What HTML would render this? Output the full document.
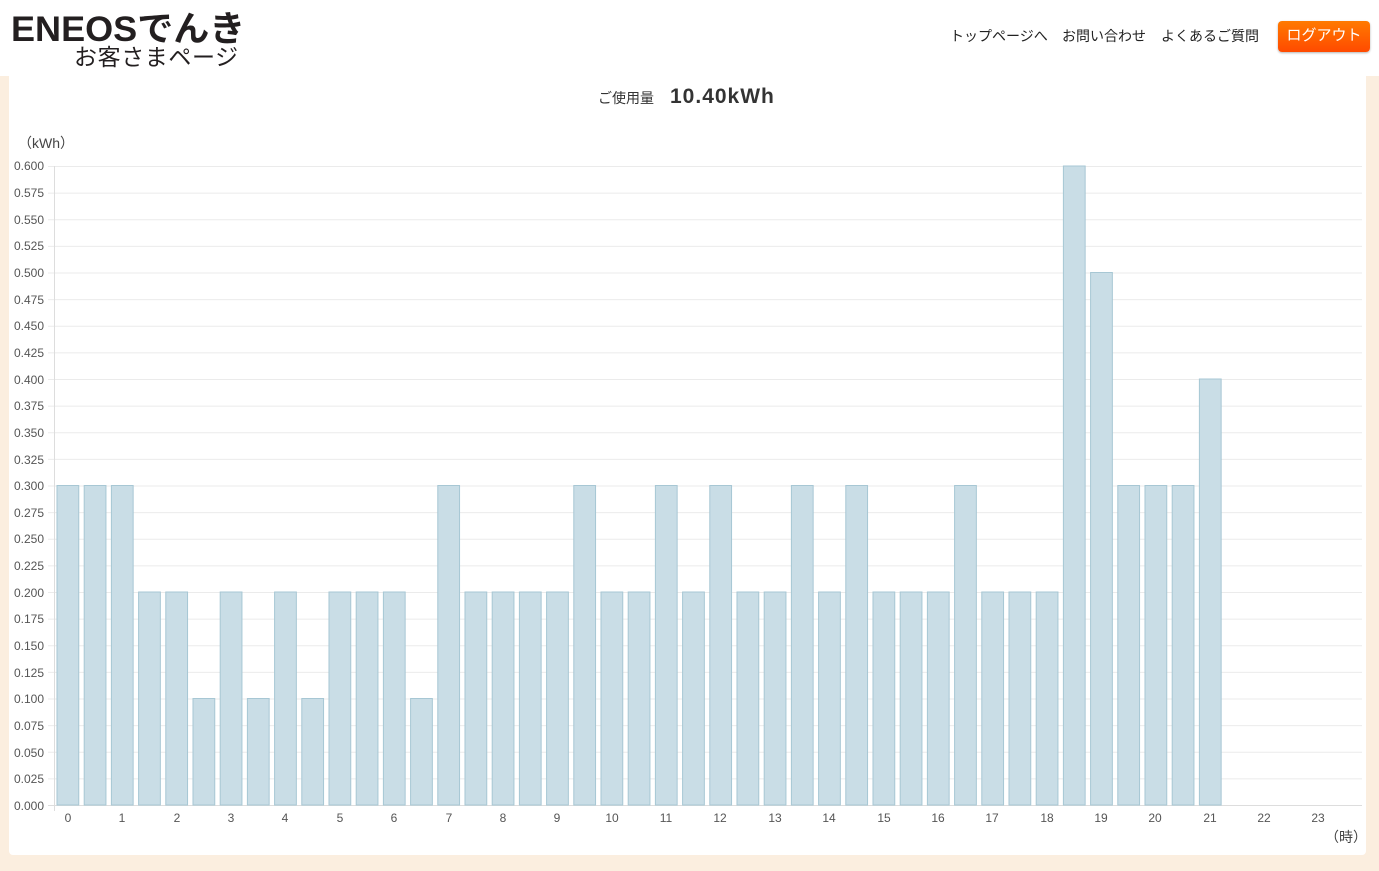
<!DOCTYPE html>
<html><head><meta charset="utf-8"><style>
body{margin:0;width:1379px;height:871px;overflow:hidden;background:#fbeedf;font-family:"Liberation Sans","Noto Sans CJK JP",sans-serif;position:relative}
.hdr{position:absolute;left:0;top:0;width:1379px;height:76px;background:#fff}
.logo1{position:absolute;left:11px;top:1px;font-size:35px;font-weight:bold;color:#231f20;letter-spacing:0;transform:scaleX(1.03);transform-origin:left top;white-space:nowrap}
.logo2{position:absolute;left:74px;top:38px;font-size:23px;letter-spacing:0.6px;color:#231f20;white-space:nowrap}
.nav{position:absolute;top:26px;font-size:14px;color:#222}
.btn{position:absolute;left:1278px;top:21px;width:92px;height:31px;border-radius:4px;background:linear-gradient(#ff7a00,#ff4a00);color:#fff;font-size:15px;text-align:center;line-height:29px;box-shadow:0 1px 2px rgba(0,0,0,.3)}
.card{position:absolute;left:9px;top:76px;width:1357px;height:779px;background:#fff;border-radius:0 0 4px 4px}
</style></head><body>
<div class="hdr">
<div class="logo1">ENEOSでんき</div>
<div class="logo2">お客さまページ</div>
<div class="nav" style="left:950px">トップページへ</div>
<div class="nav" style="left:1062px">お問い合わせ</div>
<div class="nav" style="left:1161px">よくあるご質問</div>
<div class="btn">ログアウト</div>
</div>
<div class="card"></div>
<svg style="position:absolute;left:0;top:0" width="1379" height="871">
<text x="598" y="103" font-size="14" fill="#333">ご使用量</text>
<text x="670" y="103" font-size="21" font-weight="bold" fill="#333" letter-spacing="1">10.40kWh</text>
<text x="18" y="148" font-size="14" fill="#444">（kWh）</text>
<text x="1325" y="842" font-size="14" fill="#444">（時）</text>
<g stroke="#ebebeb">
<line x1="48" x2="1362" y1="166.5" y2="166.5"/><line x1="48" x2="1362" y1="193.1" y2="193.1"/><line x1="48" x2="1362" y1="219.8" y2="219.8"/><line x1="48" x2="1362" y1="246.4" y2="246.4"/><line x1="48" x2="1362" y1="273" y2="273"/><line x1="48" x2="1362" y1="299.6" y2="299.6"/><line x1="48" x2="1362" y1="326.3" y2="326.3"/><line x1="48" x2="1362" y1="352.9" y2="352.9"/><line x1="48" x2="1362" y1="379.5" y2="379.5"/><line x1="48" x2="1362" y1="406.1" y2="406.1"/><line x1="48" x2="1362" y1="432.8" y2="432.8"/><line x1="48" x2="1362" y1="459.4" y2="459.4"/><line x1="48" x2="1362" y1="486" y2="486"/><line x1="48" x2="1362" y1="512.6" y2="512.6"/><line x1="48" x2="1362" y1="539.3" y2="539.3"/><line x1="48" x2="1362" y1="565.9" y2="565.9"/><line x1="48" x2="1362" y1="592.5" y2="592.5"/><line x1="48" x2="1362" y1="619.1" y2="619.1"/><line x1="48" x2="1362" y1="645.8" y2="645.8"/><line x1="48" x2="1362" y1="672.4" y2="672.4"/><line x1="48" x2="1362" y1="699" y2="699"/><line x1="48" x2="1362" y1="725.6" y2="725.6"/><line x1="48" x2="1362" y1="752.3" y2="752.3"/><line x1="48" x2="1362" y1="778.9" y2="778.9"/>
<line x1="54.5" x2="54.5" y1="166" y2="811" stroke="#ddd"/>
<line x1="48" x2="1362" y1="805.5" y2="805.5" stroke="#ddd"/>
</g>
<g font-size="12" fill="#555" text-anchor="end">
<text x="44" y="170">0.600</text><text x="44" y="197">0.575</text><text x="44" y="224">0.550</text><text x="44" y="250">0.525</text><text x="44" y="277">0.500</text><text x="44" y="304">0.475</text><text x="44" y="330">0.450</text><text x="44" y="357">0.425</text><text x="44" y="384">0.400</text><text x="44" y="410">0.375</text><text x="44" y="437">0.350</text><text x="44" y="464">0.325</text><text x="44" y="490">0.300</text><text x="44" y="517">0.275</text><text x="44" y="543">0.250</text><text x="44" y="570">0.225</text><text x="44" y="597">0.200</text><text x="44" y="623">0.175</text><text x="44" y="650">0.150</text><text x="44" y="677">0.125</text><text x="44" y="703">0.100</text><text x="44" y="730">0.075</text><text x="44" y="757">0.050</text><text x="44" y="783">0.025</text><text x="44" y="810">0.000</text>
</g>
<g transform="translate(54,805) scale(27.2,-1065)" fill="#c9dde6" stroke="#a7c7d4" stroke-width="1">
<rect vector-effect="non-scaling-stroke" x="0.11" width="0.8" y="0" height="0.3"/><rect vector-effect="non-scaling-stroke" x="1.11" width="0.8" height="0.3"/><rect vector-effect="non-scaling-stroke" x="2.11" width="0.8" height="0.3"/><rect vector-effect="non-scaling-stroke" x="3.11" width="0.8" height="0.2"/><rect vector-effect="non-scaling-stroke" x="4.11" width="0.8" height="0.2"/><rect vector-effect="non-scaling-stroke" x="5.11" width="0.8" height="0.1"/><rect vector-effect="non-scaling-stroke" x="6.11" width="0.8" height="0.2"/><rect vector-effect="non-scaling-stroke" x="7.11" width="0.8" height="0.1"/><rect vector-effect="non-scaling-stroke" x="8.11" width="0.8" height="0.2"/><rect vector-effect="non-scaling-stroke" x="9.11" width="0.8" height="0.1"/><rect vector-effect="non-scaling-stroke" x="10.11" width="0.8" height="0.2"/><rect vector-effect="non-scaling-stroke" x="11.11" width="0.8" height="0.2"/><rect vector-effect="non-scaling-stroke" x="12.11" width="0.8" height="0.2"/><rect vector-effect="non-scaling-stroke" x="13.11" width="0.8" height="0.1"/><rect vector-effect="non-scaling-stroke" x="14.11" width="0.8" height="0.3"/><rect vector-effect="non-scaling-stroke" x="15.11" width="0.8" height="0.2"/><rect vector-effect="non-scaling-stroke" x="16.11" width="0.8" height="0.2"/><rect vector-effect="non-scaling-stroke" x="17.11" width="0.8" height="0.2"/><rect vector-effect="non-scaling-stroke" x="18.11" width="0.8" height="0.2"/><rect vector-effect="non-scaling-stroke" x="19.11" width="0.8" height="0.3"/><rect vector-effect="non-scaling-stroke" x="20.11" width="0.8" height="0.2"/><rect vector-effect="non-scaling-stroke" x="21.11" width="0.8" height="0.2"/><rect vector-effect="non-scaling-stroke" x="22.11" width="0.8" height="0.3"/><rect vector-effect="non-scaling-stroke" x="23.11" width="0.8" height="0.2"/><rect vector-effect="non-scaling-stroke" x="24.11" width="0.8" height="0.3"/><rect vector-effect="non-scaling-stroke" x="25.11" width="0.8" height="0.2"/><rect vector-effect="non-scaling-stroke" x="26.11" width="0.8" height="0.2"/><rect vector-effect="non-scaling-stroke" x="27.11" width="0.8" height="0.3"/><rect vector-effect="non-scaling-stroke" x="28.11" width="0.8" height="0.2"/><rect vector-effect="non-scaling-stroke" x="29.11" width="0.8" height="0.3"/><rect vector-effect="non-scaling-stroke" x="30.11" width="0.8" height="0.2"/><rect vector-effect="non-scaling-stroke" x="31.11" width="0.8" height="0.2"/><rect vector-effect="non-scaling-stroke" x="32.11" width="0.8" height="0.2"/><rect vector-effect="non-scaling-stroke" x="33.11" width="0.8" height="0.3"/><rect vector-effect="non-scaling-stroke" x="34.11" width="0.8" height="0.2"/><rect vector-effect="non-scaling-stroke" x="35.11" width="0.8" height="0.2"/><rect vector-effect="non-scaling-stroke" x="36.11" width="0.8" height="0.2"/><rect vector-effect="non-scaling-stroke" x="37.11" width="0.8" height="0.6"/><rect vector-effect="non-scaling-stroke" x="38.11" width="0.8" height="0.5"/><rect vector-effect="non-scaling-stroke" x="39.11" width="0.8" height="0.3"/><rect vector-effect="non-scaling-stroke" x="40.11" width="0.8" height="0.3"/><rect vector-effect="non-scaling-stroke" x="41.11" width="0.8" height="0.3"/><rect vector-effect="non-scaling-stroke" x="42.11" width="0.8" height="0.4"/>
</g>
<g font-size="12" fill="#555" text-anchor="middle">
<text x="68" y="822">0</text><text x="122" y="822">1</text><text x="177" y="822">2</text><text x="231" y="822">3</text><text x="285" y="822">4</text><text x="340" y="822">5</text><text x="394" y="822">6</text><text x="449" y="822">7</text><text x="503" y="822">8</text><text x="557" y="822">9</text><text x="612" y="822">10</text><text x="666" y="822">11</text><text x="720" y="822">12</text><text x="775" y="822">13</text><text x="829" y="822">14</text><text x="884" y="822">15</text><text x="938" y="822">16</text><text x="992" y="822">17</text><text x="1047" y="822">18</text><text x="1101" y="822">19</text><text x="1155" y="822">20</text><text x="1210" y="822">21</text><text x="1264" y="822">22</text><text x="1318" y="822">23</text>
</g>
</svg>
</body></html>
